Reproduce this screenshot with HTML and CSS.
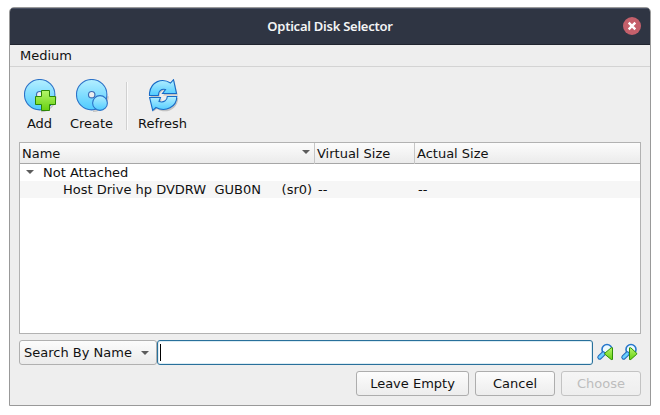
FILE: index.html
```html
<!DOCTYPE html>
<html lang="en">
<head>
<meta charset="utf-8">
<title>Optical Disk Selector</title>
<link rel="stylesheet" href="styles.css">
</head>
<body>
<svg class="defs" width="0" height="0" aria-hidden="true">
  <defs>
    <linearGradient id="blue" x1="0" y1="0" x2="0" y2="1"><stop offset="0" stop-color="#b4efff"/><stop offset="1" stop-color="#4fcbff"/></linearGradient>
    <linearGradient id="green" x1="0" y1="0" x2="0" y2="1"><stop offset="0" stop-color="#b4f56a"/><stop offset="1" stop-color="#68d010"/></linearGradient>
  </defs>
</svg>
<main class="window">
  <header class="titlebar">
    <h1>Optical Disk Selector</h1>
    <button class="close" aria-label="Close"><svg width="18" height="18" viewBox="0 0 18 18"><path d="M5.700 5.700l6.600 6.600M12.300 5.700l-6.600 6.600"/></svg></button>
  </header>
  <nav class="menubar"><span>Medium</span></nav>
  <section class="toolbar">
    <button class="tool add">
      <svg width="34" height="34" viewBox="0 0 34 34"><path class="shadow" d="M17 32.500a15.500 15.500 0 0 0 15-15"/><circle class="disk" cx="15.700" cy="15.700" r="15.200"/><circle class="hole" cx="15.700" cy="15.700" r="3.200"/><path class="plus" d="M17.500 11.500h8v6h6v8h-6v6h-8v-6h-6v-8h6z"/></svg>
      <span>Add</span>
    </button>
    <button class="tool create">
      <svg width="34" height="34" viewBox="0 0 34 34"><path class="shadow" d="M17 32.200a15.500 15.500 0 0 0 15-15"/><circle class="disk" cx="15.700" cy="15.700" r="15.200"/><circle class="hole" cx="15.700" cy="15.700" r="3.200"/><circle class="disk" cx="24" cy="24" r="7.400"/></svg>
      <span>Create</span>
    </button>
    <i class="separator"></i>
    <button class="tool refresh">
      <svg width="34" height="34" viewBox="0 0 34 34"><g class="arrows-shadow" transform="translate(1 1)"><path d="M2.500 17C2.500 5 14-2 24 4L26.500.7 29.800 15.500H15L18.500 11C14.500 9.500 11.500 12 11.500 17Z"/><path d="M30.200 18C30.200 29 18 35 9 29L5.500 31.500 2.800 19.500H14L12 22.500C16 25 20 22 20 18Z"/></g><path class="arrow" d="M2.500 16.500V14C4 2.500 15-1.500 23.500 4L26.500.7 29.500 14.500H15.500L18.500 10.500C14 9.500 11.200 12.500 11.300 16.500Z"/><path class="arrow" d="M29.800 17.500C29.800 28 18.500 33.500 9 28.500L5.700 31.500 2.600 18.500H13.500L12 22.500C16.500 24 20.300 21.500 20.300 17.500Z"/></svg>
      <span>Refresh</span>
    </button>
  </section>
  <section class="tree">
    <div class="row head">
      <span class="name">Name<svg class="tri" width="8" height="4" viewBox="0 0 8 4"><path d="M0 0h8L4 4z"/></svg></span><span>Virtual Size</span><span>Actual Size</span>
    </div>
    <div class="row group"><svg class="tri" width="8" height="4" viewBox="0 0 8 4"><path d="M0 0h8L4 4z"/></svg><span>Not Attached</span></div>
    <div class="row item"><span>Host Drive hp DVDRW  GUB0N     (sr0)</span><span>--</span><span>--</span></div>
  </section>
  <section class="search">
    <div class="combo"><span>Search By Name</span><svg class="tri" width="8" height="4" viewBox="0 0 8 4"><path d="M0 0h8L4 4z"/></svg></div>
    <div class="field"><i class="caret"></i></div>
    <svg class="find" width="17" height="17" viewBox="0 0 17 17"><circle class="lens" cx="10" cy="5.500" r="5"/><path class="handle-edge" d="M6.300 9.700L2.700 13.300"/><path class="handle" d="M6.300 9.700L2.700 13.300"/><path class="step" d="M15.500 3.800v11.700h-1.300L7.800 10.200v-1l6.400-5.400z"/></svg>
    <svg class="find" width="17" height="17" viewBox="0 0 17 17"><circle class="lens" cx="10" cy="5.500" r="5"/><path class="handle-edge" d="M6.300 9.700L2.700 13.300"/><path class="handle" d="M6.300 9.700L2.700 13.300"/><path class="step" d="M8.500 3.800v11.700h1.300L15.700 10.200v-1L9.800 3.800z"/></svg>
  </section>
  <footer class="actions">
    <button class="btn wide">Leave Empty</button>
    <button class="btn">Cancel</button>
    <button class="btn" disabled>Choose</button>
  </footer>
</main>
</body>
</html>
```
FILE: styles.css
```css
* { box-sizing: border-box; }
body { margin: 0; background: #fff; overflow: hidden; color: #111; font: 13px/17px "DejaVu Sans", sans-serif; }
button { font: inherit; color: inherit; border: 0; padding: 0; background: none; }
.defs { position: absolute; }
.window { width: 642px; height: 399px; margin: 7px 0 0 9px; background: #eee; border: 1px solid #999; border-radius: 5px 5px 0 0; display: flex; flex-direction: column; overflow: hidden; }
.titlebar { height: 37px; flex: none; background: #2f3543; border-top: 1px solid #4b5264; border-bottom: 1px solid #20242f; display: grid; grid-template-columns: 1fr auto 1fr; align-items: center; }
h1 { grid-column: 2; margin: 0 0 2px; color: #f3f4f5; font: 600 13px/18px "Noto Sans", sans-serif; letter-spacing: -.25px; white-space: nowrap; }
.close { justify-self: end; margin: 0 9px 1px 0; width: 18px; height: 18px; border-radius: 50%; background: #c4606b; }
.close svg { display: block; }
.close path { stroke: #fff; stroke-width: 2.4; fill: none; }
.menubar { height: 22px; flex: none; padding: 2px 10px; border-bottom: 1px solid #d3d3d3; }
.toolbar { height: 75px; flex: none; display: flex; padding: 12px 0 0 9px; }
.tool { display: flex; flex-direction: column; align-items: center; gap: 2px; height: 53px; }
.tool svg { display: block; flex: none; margin-left: 2px; }
.add { width: 41px; }
.create { width: 63px; }
.refresh { width: 65px; margin-left: -1px; }
.separator { width: 2px; height: 48px; margin: 3px 3px 0 3px; border-left: 1px solid #d0d0d0; background: #fafafa; }
.disk { fill: url(#blue); stroke: #2c72c8; stroke-width: 1.1; }
.hole { fill: #eee; stroke: #3d6eb5; stroke-width: 1.2; }
.shadow { fill: none; stroke: #c4c4c4; stroke-width: 1.5; }
.plus { fill: url(#green); stroke: #2d8606; }
.arrow { fill: url(#blue); stroke: #176bc7; stroke-width: 1.1; }
.arrows-shadow { fill: #c2c2c2; }
.tree { height: 192px; flex: none; margin: 0 9px; border: 1px solid #b2b2b2; background: #fff; }
.row { display: grid; grid-template-columns: 295px 100px 1fr; height: 17px; white-space: pre; }
.head { height: 21px; line-height: 21px; background: linear-gradient(#fcfcfc, #ebebeb); border-bottom: 1px solid #a6a6a6; }
.head span { padding-left: 2px; }
.head .name { display: flex; justify-content: space-between; }
.head .tri { margin: 7px 5px 0 0; }
.head span + span { box-shadow: -1px 0 #c6c6c6; }
.group { display: flex; }
.group .tri { margin: 6px 9px 0 6px; }
.item { background: #f6f6f6; }
.item span { padding-left: 3px; }
.item span:first-child { padding-left: 43px; }
.tri { flex: none; fill: #5c5c5c; }
.search { display: flex; height: 25px; flex: none; margin: 6px 0 0 9px; }
.combo { width: 138px; display: flex; justify-content: space-between; align-items: center; padding: 0 7px 0 4px; border: 1px solid #b0b0b0; border-radius: 3px; background: linear-gradient(#fcfcfc, #ebebeb); }
.field { width: 436px; border: 1px solid #28709b; border-radius: 3px; background: #fff; box-shadow: inset 0 0 0 1px #dcecf3; padding: 3px 2px; }
.caret { display: block; width: 1px; height: 17px; background: #000; }
.find { margin: 4px 0 0 4px; overflow: visible; }
.find + .find { margin-left: 7px; }
.lens { fill: #edf9ff; stroke: #2677cc; stroke-width: 1.6; }
.handle-edge { stroke: #2368b8; stroke-width: 4.8; stroke-linecap: round; }
.handle { stroke: #69cfff; stroke-width: 2.8; stroke-linecap: round; }
.step { fill: url(#green); stroke: #2f9008; }
.actions { display: flex; justify-content: flex-end; gap: 6px; margin: 6px 9px 0 0; }
.btn { width: 80px; height: 25px; border: 1px solid #adadad; border-radius: 3px; background: linear-gradient(#fcfcfc, #ededed); }
.wide { width: 113px; }
.btn:disabled { color: #bdbdbd; border-color: #c3c3c3; background: linear-gradient(#f5f5f5, #eee); }
```
